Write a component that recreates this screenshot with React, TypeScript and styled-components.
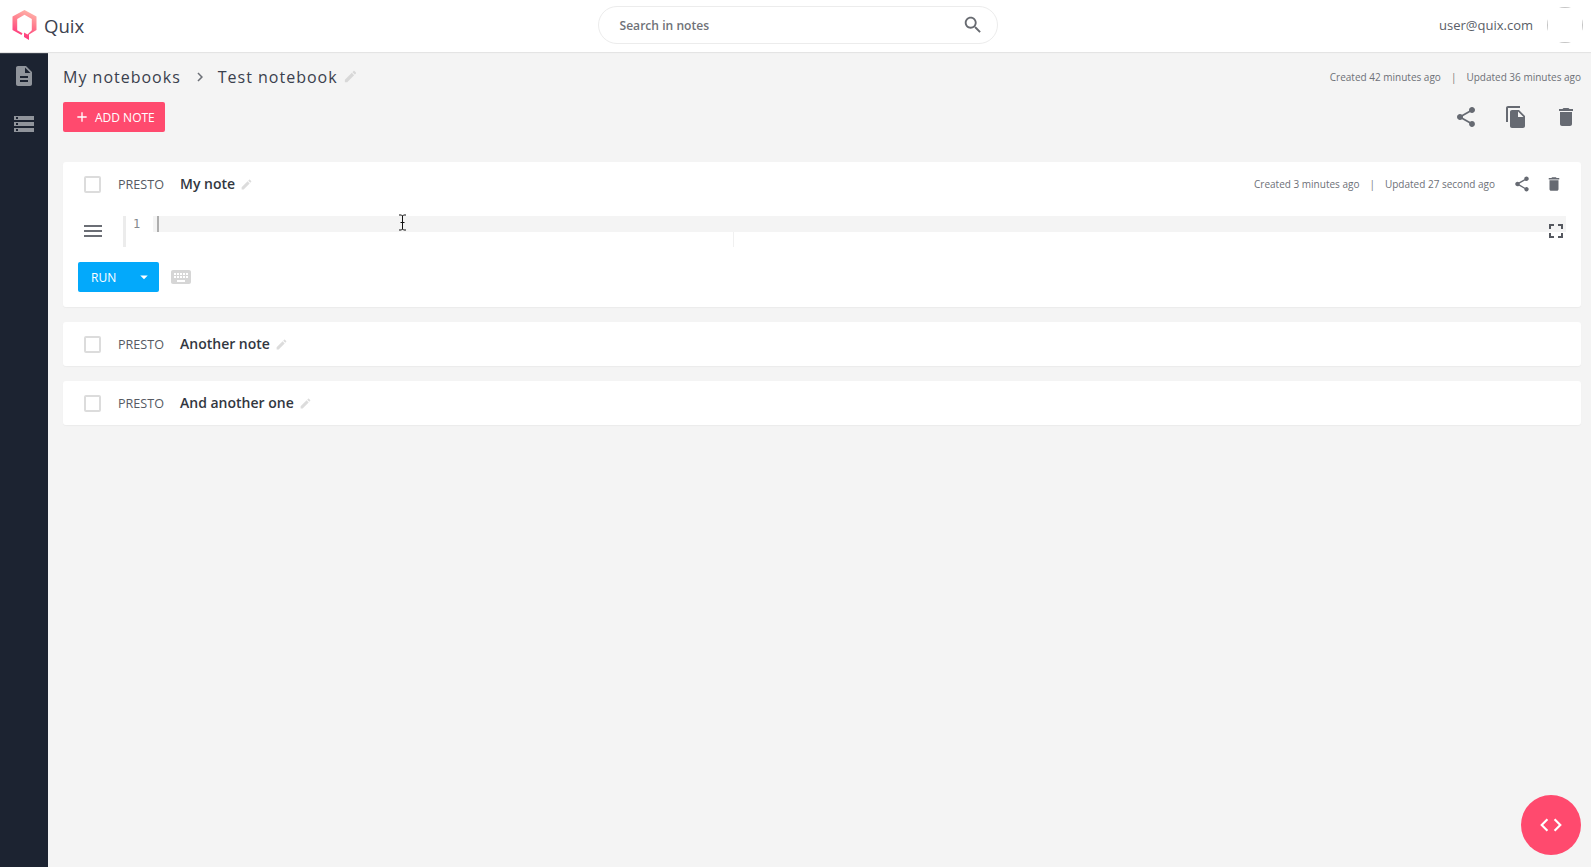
import React, { FC } from 'react';
import styled, { createGlobalStyle } from 'styled-components';

const GlobalStyle = createGlobalStyle`
  html, body {
    margin: 0;
    height: 100%;
    background: #f4f4f4;
    font-family: "Open Sans", "Liberation Sans", sans-serif;
    color: #2f3542;
  }
  * { box-sizing: border-box; }
`;

const ICONS = {
  share:
    'M18 16.08c-.76 0-1.44.3-1.96.77L8.91 12.7c.05-.23.09-.46.09-.7s-.04-.47-.09-.7l7.05-4.11c.54.5 1.25.81 2.04.81 1.66 0 3-1.34 3-3s-1.34-3-3-3-3 1.34-3 3c0 .24.04.47.09.7L8.04 9.81C7.5 9.31 6.79 9 6 9c-1.66 0-3 1.34-3 3s1.34 3 3 3c.79 0 1.5-.31 2.04-.81l7.12 4.16c-.05.21-.08.43-.08.65 0 1.61 1.31 2.92 2.92 2.92 1.61 0 2.92-1.31 2.92-2.92s-1.31-2.92-2.92-2.92z',
  copy: 'M16 1H4c-1.1 0-2 .9-2 2v14h2V3h12V1zm-1 4l6 6v10c0 1.1-.9 2-2 2H7.99C6.89 23 6 22.1 6 21l.01-14c0-1.1.89-2 2-2h7zm-1 7h5.5L14 6.5V12z',
  trash: 'M6 19c0 1.1.9 2 2 2h8c1.1 0 2-.9 2-2V7H6v12zM19 4h-3.5l-1-1h-5l-1 1H5v2h14V4z',
  edit: 'M3 17.25V21h3.75L17.81 9.94l-3.75-3.75L3 17.25zM20.71 7.04c.39-.39.39-1.02 0-1.41l-2.34-2.34c-.39-.39-1.02-.39-1.41 0l-1.83 1.83 3.75 3.75 1.83-1.83z',
  description:
    'M14 2H6c-1.1 0-1.99.9-1.99 2L4 20c0 1.1.89 2 1.99 2H18c1.1 0 2-.9 2-2V8l-6-6zm2 16H8v-2h8v2zm0-4H8v-2h8v2zm-3-5V3.5L18.5 9H13z',
  storage: 'M2 20h20v-4H2v4zm2-3h2v2H4v-2zM2 4v4h20V4H2zm4 3H4V5h2v2zm-4 7h20v-4H2v4zm2-3h2v2H4v-2z',
  search:
    'M15.5 14h-.79l-.28-.27C15.41 12.59 16 11.11 16 9.5 16 5.91 13.09 3 9.5 3S3 5.91 3 9.5 5.91 16 9.5 16c1.61 0 3.09-.59 4.23-1.57l.27.28v.79l5 4.99L20.49 19l-4.99-5zm-6 0C7.01 14 5 11.99 5 9.5S7.01 5 9.5 5 14 7.01 14 9.5 11.99 14 9.5 14z',
  keyboard:
    'M20 5H4c-1.1 0-1.99.9-1.99 2L2 17c0 1.1.9 2 2 2h16c1.1 0 2-.9 2-2V7c0-1.1-.9-2-2-2zm-9 3h2v2h-2V8zm0 3h2v2h-2v-2zM8 8h2v2H8V8zm0 3h2v2H8v-2zm-1 2H5v-2h2v2zm0-3H5V8h2v2zm9 7H8v-2h8v2zm0-4h-2v-2h2v2zm0-3h-2V8h2v2zm3 3h-2v-2h2v2zm0-3h-2V8h2v2z',
  fullscreen: 'M7 14H5v5h5v-2H7v-3zm-2-4h2V7h3V5H5v5zm12 7h-3v2h5v-5h-2v3zM14 5v2h3v3h2V5h-5z',
  menu: 'M3 18h18v-2H3v2zm0-5h18v-2H3v2zm0-7v2h18V6H3z',
  chevron: 'M10 6L8.59 7.41 13.17 12l-4.58 4.59L10 18l6-6z',
  caret: 'M7 10l5 5 5-5z',
  add: 'M19 13h-6v6h-2v-6H5v-2h6V5h2v6h6v2z',
  code: 'M9.4 16.6L4.8 12l4.6-4.6L8 6l-6 6 6 6 1.4-1.4zm5.2 0l4.6-4.6-4.6-4.6L16 6l6 6-6 6-1.4-1.4z',
};

const Icon: FC<{ name: keyof typeof ICONS; size?: number; color?: string }> = ({
  name,
  size = 24,
  color = '#666a72',
}) => (
  <svg width={size} height={size} viewBox="0 0 24 24" fill={color} style={{ display: 'block', flex: 'none' }}>
    <path d={ICONS[name]} />
  </svg>
);

const Logo: FC = () => (
  <svg width="25" height="30" viewBox="0 0 25 30" style={{ display: 'block' }}>
    <defs>
      <linearGradient id="logoGrad" x1="0.65" y1="0" x2="0.35" y2="1">
        <stop offset="0" stopColor="#ffb4aa" />
        <stop offset="0.45" stopColor="#ff7a8c" />
        <stop offset="1" stopColor="#ff2a7a" />
      </linearGradient>
    </defs>
    <path
      fill="url(#logoGrad)"
      d="M12.5 0 L24.5 6.5 V20 L17 24.5 V30 L12 27 V22.5 L15.5 24.5 L19.8 20.3 V9 L12.5 4.8 L5.2 9 V20.3 L10.5 23.2 L9.5 25 L0.5 20 V6.5 Z"
    />
  </svg>
);

const Page = styled.div`
  display: flex;
  flex-direction: column;
  height: 867px;
  overflow: hidden;
  position: relative;
`;

const Header = styled.header`
  display: grid;
  grid-template-columns: 1fr auto 1fr;
  align-items: center;
  flex: none;
  height: 52px;
  padding: 0 8px 2px 12px;
  background: #fff;
  box-shadow: 0 1px 1px #e4e4e4;
  position: relative;
  z-index: 2;
`;

const Brand = styled.div`
  display: flex;
  align-items: center;
  gap: 7px;
  font-size: 18.6px;
  color: #3c4250;
`;

const SearchBox = styled.div`
  display: flex;
  align-items: center;
  justify-content: space-between;
  width: 400px;
  height: 38px;
  padding: 0 13px 0 21px;
  background: #fff;
  border: 1px solid #ececec;
  border-radius: 19px;
  font-size: 12.1px;
  font-weight: 600;
  color: #6f7278;
`;

const UserArea = styled.div`
  display: flex;
  align-items: center;
  justify-content: flex-end;
  gap: 14px;
  font-size: 13px;
  color: #5a5e67;
`;

const Avatar = styled.div`
  width: 36px;
  height: 36px;
  border-radius: 50%;
  overflow: hidden;
`;

const AvatarFrame = styled.div`
  width: 100%;
  height: 100%;
  border: 1px solid #c4c4c4;
`;

const Body = styled.div`
  display: flex;
  flex: 1;
  min-height: 0;
`;

const Sidebar = styled.nav`
  display: flex;
  flex-direction: column;
  align-items: center;
  gap: 24px;
  flex: none;
  width: 48px;
  padding-top: 12px;
  background: #1c2331;
`;

const Main = styled.main`
  flex: 1;
  min-width: 0;
  padding: 0 10px 0 15px;
`;

const TitleRow = styled.div`
  display: flex;
  align-items: center;
  justify-content: space-between;
  height: 50px;
`;

const Breadcrumbs = styled.div`
  display: flex;
  align-items: center;
  padding-bottom: 1px;
  font-size: 16px;
  letter-spacing: 1px;
  color: #3a404d;
`;

const CrumbSeparator = styled.span`
  display: flex;
  margin: 0 9px 0 10px;
`;

const EditMark = styled.span`
  display: inline-flex;
  margin-left: 5px;
`;

const Timestamps = styled.div`
  display: flex;
  font-size: 10px;
  color: #6d7077;
`;

const StampDivider = styled.span`
  margin: 0 10px;
  color: #777;
`;

const ActionsRow = styled.div`
  display: flex;
  align-items: center;
  justify-content: space-between;
  height: 30px;
  padding-right: 3px;
  margin-bottom: 30px;
`;

const AddButton = styled.div`
  display: flex;
  align-items: center;
  gap: 5px;
  width: 102px;
  height: 30px;
  padding-left: 11px;
  background: #ff4a6e;
  border-radius: 2px;
  font-size: 12px;
  color: #fff;
`;

const PageActions = styled.div`
  display: flex;
  gap: 26px;
`;

const NoteCard = styled.section`
  background: #fff;
  border-radius: 3px;
  box-shadow: 0 1px 1px #ececec;
  margin-bottom: 15px;
`;

const NoteHeader = styled.div`
  display: flex;
  align-items: center;
  height: 44px;
  padding: 0 18px 0 21px;
`;

const CheckBox = styled.span`
  width: 17px;
  height: 17px;
  flex: none;
  border: 2px solid #dcdcdc;
  border-radius: 2px;
`;

const NoteType = styled.span`
  margin-left: 17px;
  font-size: 12.6px;
  color: #565a63;
`;

const NoteName = styled.span`
  margin-left: 16px;
  margin-top: -1px;
  font-size: 14px;
  font-weight: 600;
  color: #32373f;
`;

const NoteMeta = styled.div`
  display: flex;
  align-items: center;
  margin-left: auto;
`;

const NoteActions = styled.div`
  display: flex;
  gap: 14px;
  margin-left: 18px;
`;

const EditorRow = styled.div`
  display: flex;
  align-items: flex-start;
  padding: 10px 15px 0 21px;
`;

const HandleSlot = styled.div`
  flex: none;
  width: 42px;
  padding-top: 3px;
  margin-left: -3px;
`;

const Editor = styled.div`
  position: relative;
  display: flex;
  flex: 1;
  height: 31px;
  border-left: 3px solid #ececec;
  font-family: "DejaVu Sans Mono", "Liberation Mono", monospace;
`;

const Gutter = styled.div`
  flex: none;
  width: 27px;
  height: 16px;
  padding-left: 7px;
  font-size: 12px;
  line-height: 17px;
  color: #85888e;
`;

const ActiveLine = styled.div`
  flex: 1;
  height: 16px;
  padding-left: 4px;
  background: #f4f4f4;
`;

const Caret = styled.div`
  width: 2px;
  height: 16px;
  background: #aeaeae;
`;

const PrintMargin = styled.div`
  position: absolute;
  left: 607px;
  top: 16px;
  bottom: 0;
  width: 1px;
  background: #f0f0f0;
`;

const FullscreenToggle = styled.div`
  position: absolute;
  right: -2px;
  top: 3px;
`;

const MousePointer = styled.svg`
  position: absolute;
  left: 272px;
  top: -2px;
`;

const RunRow = styled.div`
  display: flex;
  align-items: center;
  gap: 10px;
  padding: 15px 0 15px 15px;
`;

const RunButton = styled.div`
  display: flex;
  align-items: center;
  justify-content: space-between;
  width: 81px;
  height: 30px;
  padding: 0 6px 0 13px;
  background: #03a9fb;
  border-radius: 2px;
  font-size: 12px;
  color: #fff;
`;

const Fab = styled.div`
  position: absolute;
  right: 10px;
  bottom: 12px;
  display: flex;
  align-items: center;
  justify-content: center;
  width: 60px;
  height: 60px;
  border-radius: 50%;
  background: #ff4a6e;
`;

const NoteTitle: FC<{ name: string }> = ({ name }) => (
  <>
    <CheckBox />
    <NoteType>PRESTO</NoteType>
    <NoteName>{name}</NoteName>
    <EditMark>
      <Icon name="edit" size={13} color="#dcdcdc" />
    </EditMark>
  </>
);

export default function App() {
  return (
    <Page>
      <GlobalStyle />
      <Header>
        <Brand>
          <Logo />
          Quix
        </Brand>
        <SearchBox>
          Search in notes
          <Icon name="search" size={22} color="#676a70" />
        </SearchBox>
        <UserArea>
          user@quix.com
          <Avatar>
            <AvatarFrame />
          </Avatar>
        </UserArea>
      </Header>
      <Body>
        <Sidebar>
          <Icon name="description" color="#90949b" />
          <Icon name="storage" color="#90949b" />
        </Sidebar>
        <Main>
          <TitleRow>
            <Breadcrumbs>
              My notebooks
              <CrumbSeparator>
                <Icon name="chevron" size={18} color="#6d7077" />
              </CrumbSeparator>
              Test notebook
              <EditMark>
                <Icon name="edit" size={15} color="#d8d8d8" />
              </EditMark>
            </Breadcrumbs>
            <Timestamps>
              Created 42 minutes ago
              <StampDivider>|</StampDivider>
              Updated 36 minutes ago
            </Timestamps>
          </TitleRow>
          <ActionsRow>
            <AddButton>
              <Icon name="add" size={16} color="#fff" />
              ADD NOTE
            </AddButton>
            <PageActions>
              <Icon name="share" />
              <Icon name="copy" />
              <Icon name="trash" />
            </PageActions>
          </ActionsRow>

          <NoteCard>
            <NoteHeader>
              <NoteTitle name="My note" />
              <NoteMeta>
                <Timestamps>
                  Created 3 minutes ago
                  <StampDivider>|</StampDivider>
                  Updated 27 second ago
                </Timestamps>
                <NoteActions>
                  <Icon name="share" size={18} />
                  <Icon name="trash" size={18} />
                </NoteActions>
              </NoteMeta>
            </NoteHeader>
            <EditorRow>
              <HandleSlot>
                <Icon name="menu" color="#6b6e75" />
              </HandleSlot>
              <Editor>
                <Gutter>1</Gutter>
                <ActiveLine>
                  <Caret />
                </ActiveLine>
                <PrintMargin />
                <FullscreenToggle>
                  <Icon name="fullscreen" color="#55585f" />
                </FullscreenToggle>
                <MousePointer width="9" height="17" viewBox="0 0 9 17">
                  <path d="M1 1h2.5L4.5 2l1-1H8M4.5 2v13M1 16h2.5l1-1 1 1H8M2.5 8.5h4" fill="none" stroke="#111" strokeWidth="1" />
                </MousePointer>
              </Editor>
            </EditorRow>
            <RunRow>
              <RunButton>
                RUN
                <Icon name="caret" size={18} color="#fff" />
              </RunButton>
              <Icon name="keyboard" size={24} color="#d6d6d6" />
            </RunRow>
          </NoteCard>

          <NoteCard>
            <NoteHeader>
              <NoteTitle name="Another note" />
            </NoteHeader>
          </NoteCard>

          <NoteCard>
            <NoteHeader>
              <NoteTitle name="And another one" />
            </NoteHeader>
          </NoteCard>
        </Main>
      </Body>
      <Fab>
        <Icon name="code" size={26} color="#fff" />
      </Fab>
    </Page>
  );
}
